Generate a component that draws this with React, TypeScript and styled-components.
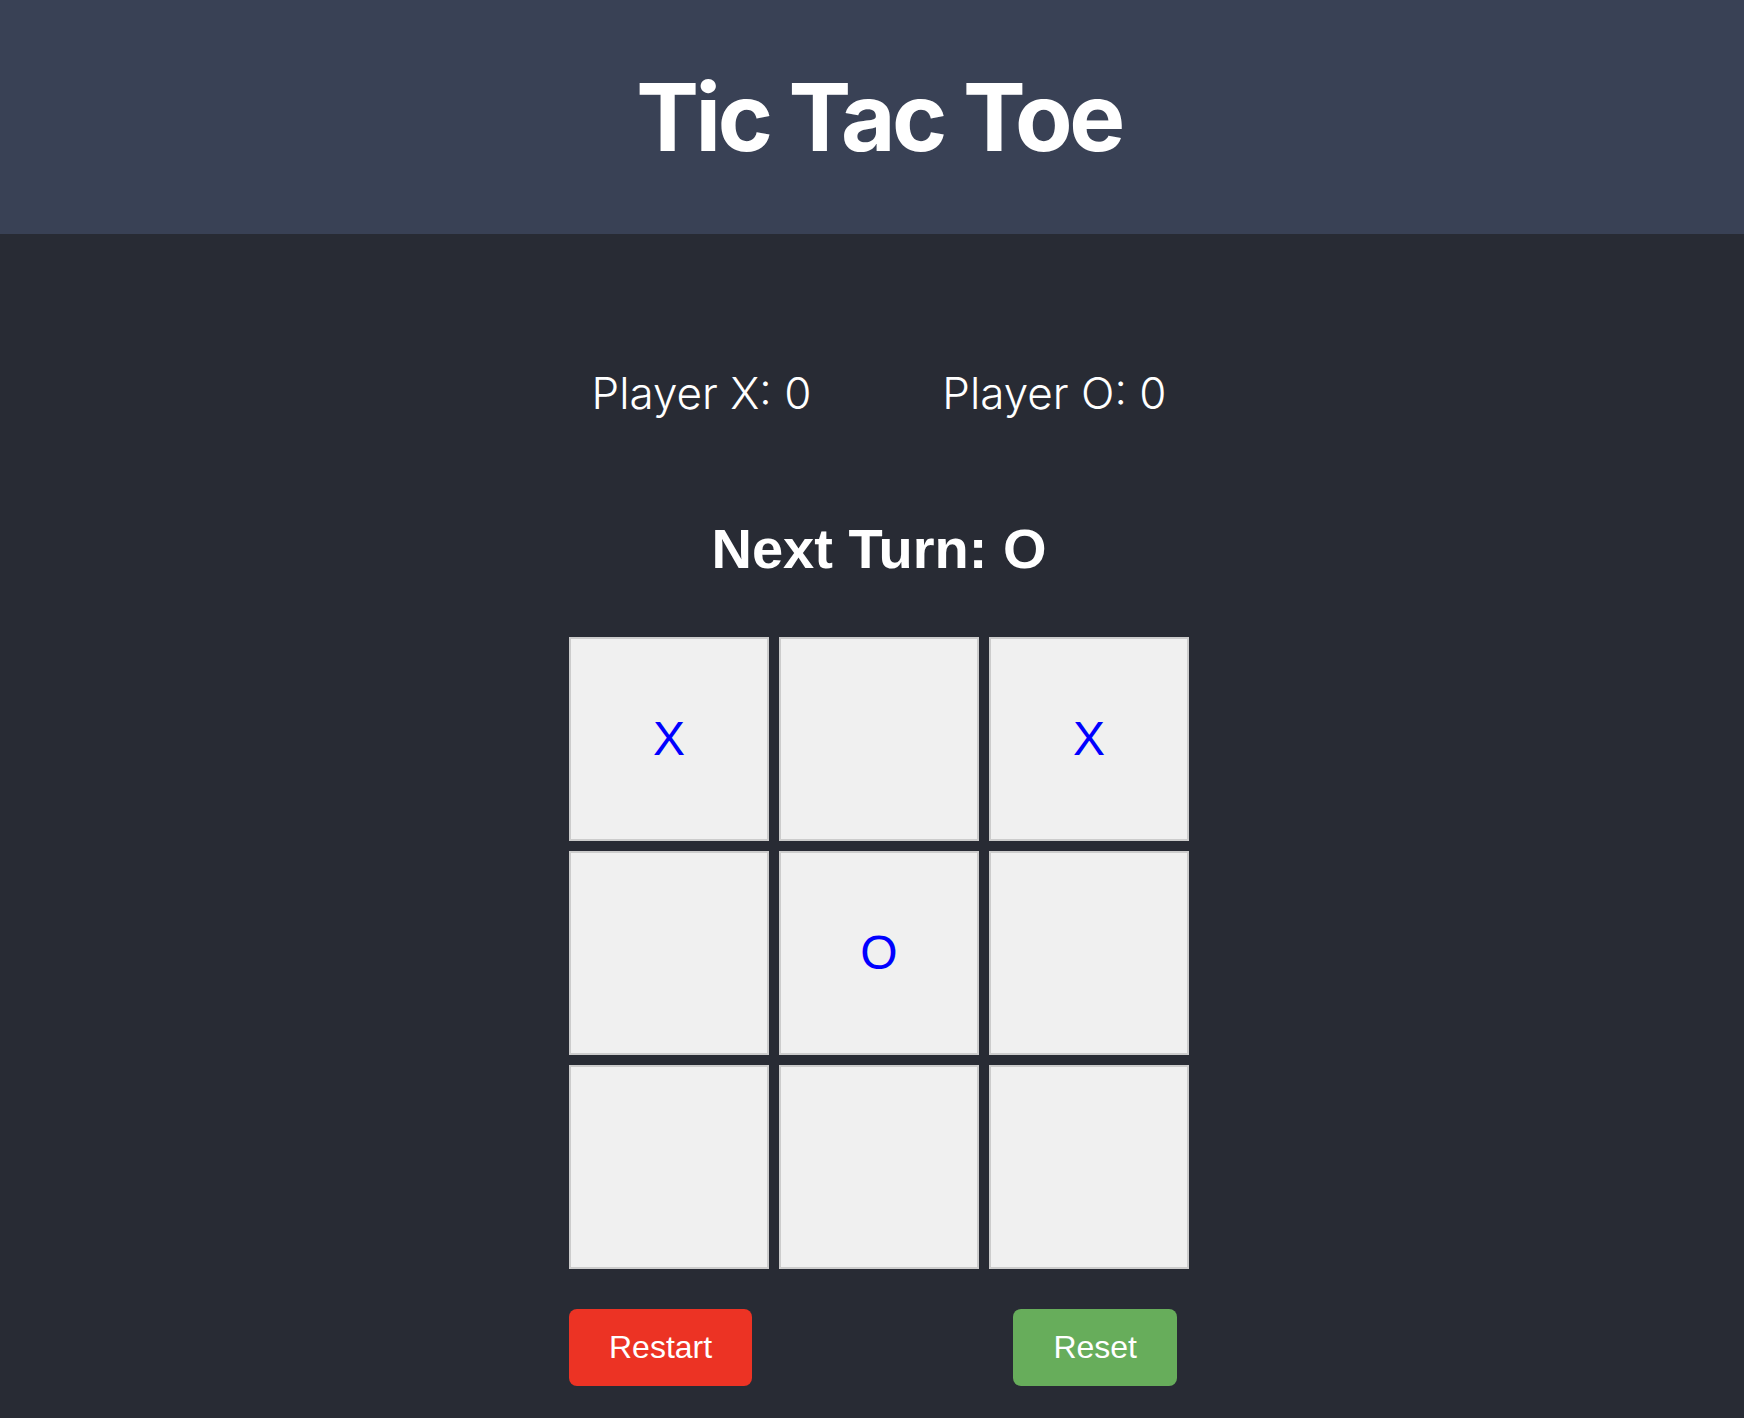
import { useState } from 'react';
import styled, { createGlobalStyle } from 'styled-components';

const GlobalStyle = createGlobalStyle`
  html, body {
    margin: 0;
    padding: 0;
    background-color: #282b34;
  }
  body {
    font-family: Inter, "Liberation Sans", sans-serif;
  }
`;

const Page = styled.div`
  min-height: 1418px;
  display: flex;
  flex-direction: column;
  background-color: #282b34;
`;

const Header = styled.header`
  height: 234px;
  padding-left: 14px;
  display: flex;
  align-items: center;
  justify-content: center;
  background-color: #394155;
`;

const Title = styled.h1`
  margin: 0;
  font-family: Inter, "Liberation Sans", sans-serif;
  font-size: 94px;
  font-weight: 700;
  line-height: 1;
  letter-spacing: -0.036em;
  color: #ffffff;
`;

const Main = styled.main`
  padding-left: 14px;
  display: flex;
  flex-direction: column;
  align-items: center;
`;

const ScoreRow = styled.div`
  margin-top: 133px;
  display: flex;
  flex-direction: row;
  gap: 131px;
`;

const Score = styled.p`
  margin: 0;
  font-family: Inter, "Liberation Sans", sans-serif;
  font-size: 44px;
  font-weight: 300;
  line-height: 1.2;
  color: #ffffff;
`;

const NextTurn = styled.h2`
  margin: 95px 0 0 0;
  font-family: "Liberation Sans", Arial, sans-serif;
  font-size: 56px;
  font-weight: 700;
  line-height: 1.2;
  color: #ffffff;
`;

const Board = styled.div`
  margin-top: 55px;
  display: grid;
  grid-template-columns: repeat(3, 200px);
  grid-auto-rows: 204px;
  gap: 10px;
`;

const Cell = styled.button`
  box-sizing: border-box;
  width: 200px;
  height: 204px;
  padding: 0;
  border: 2px solid #cccccc;
  background-color: #f0f0f0;
  display: flex;
  align-items: center;
  justify-content: center;
  font-family: "Liberation Sans", Arial, sans-serif;
  font-size: 48px;
  color: #0000ff;
  cursor: pointer;
`;

const ActionRow = styled.div`
  width: 608px;
  margin: 40px 12px 0 0;
  display: flex;
  flex-direction: row;
  justify-content: space-between;
`;

const ActionButton = styled.button<{ color: string }>`
  padding: 20px 40px;
  border: none;
  border-radius: 8px;
  background-color: ${({ color }) => color};
  font-family: "Liberation Sans", Arial, sans-serif;
  font-size: 32px;
  line-height: 37px;
  color: #ffffff;
  cursor: pointer;
`;

const App = () => {
  const [squares] = useState<string[]>(['X', '', 'X', '', 'O', '', '', '', '']);
  const scores = { X: 0, O: 0 };

  return (
    <Page>
      <GlobalStyle />
      <Header>
        <Title>Tic Tac Toe</Title>
      </Header>
      <Main>
        <ScoreRow>
          <Score>Player X: {scores.X}</Score>
          <Score>Player O: {scores.O}</Score>
        </ScoreRow>
        <NextTurn>Next Turn: O</NextTurn>
        <Board>
          {squares.map((value, i) => (
            <Cell key={i}>{value}</Cell>
          ))}
        </Board>
        <ActionRow>
          <ActionButton color="#ec3324">Restart</ActionButton>
          <ActionButton color="#67ad5b">Reset</ActionButton>
        </ActionRow>
      </Main>
    </Page>
  );
};

export default App;
